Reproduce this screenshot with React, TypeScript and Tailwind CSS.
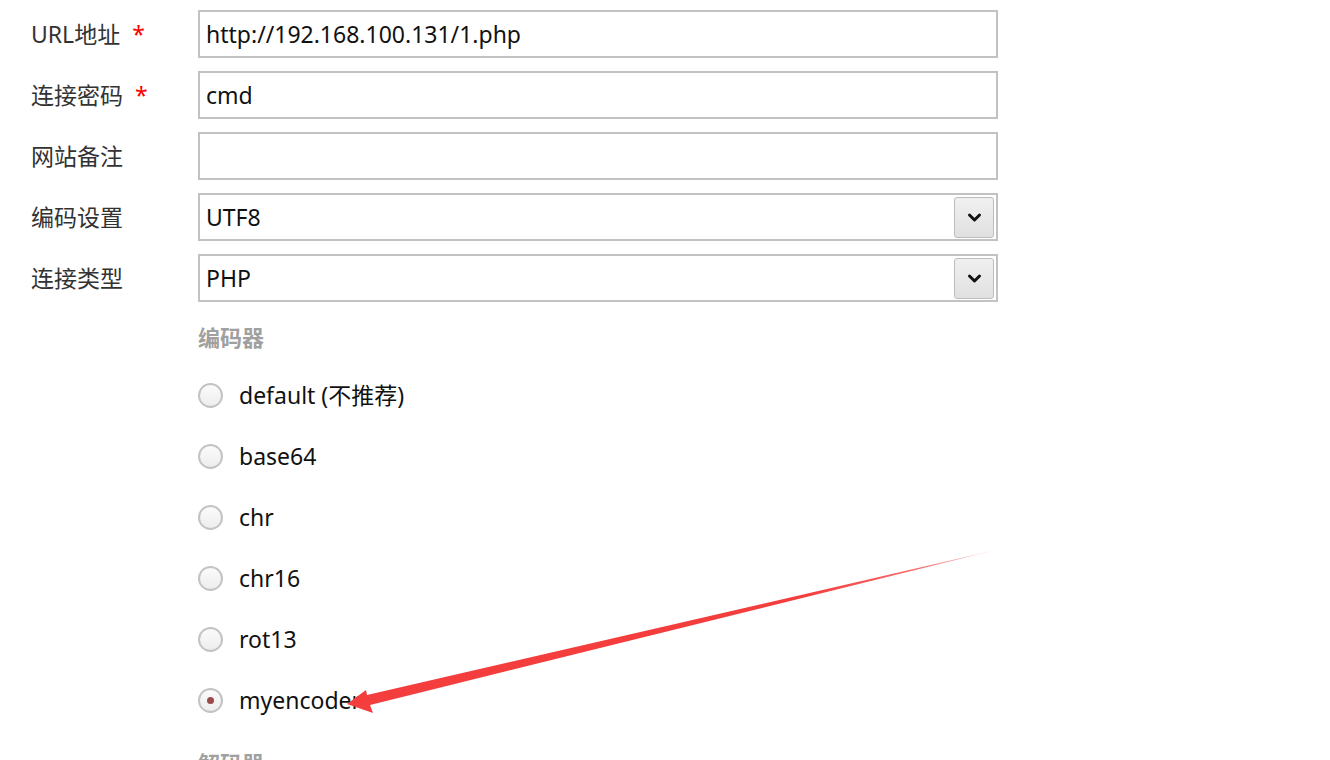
import React from "react";

const font = { fontFamily: '"Noto Sans", "Noto Sans CJK SC", sans-serif' };

const fields = [
  { label: "URL地址", required: true, value: "http://192.168.100.131/1.php", select: false },
  { label: "连接密码", required: true, value: "cmd", select: false },
  { label: "网站备注", required: false, value: "", select: false },
  { label: "编码设置", required: false, value: "UTF8", select: true },
  { label: "连接类型", required: false, value: "PHP", select: true },
];

const encoders = ["default (不推荐)", "base64", "chr", "chr16", "rot13", "myencoder"];

const Chevron = () => (
  <svg width="15" height="11" viewBox="0 0 15 11">
    <path d="M2.5 3 L7.5 8 L12.5 3" fill="none" stroke="#111" strokeWidth="3" strokeLinecap="round" strokeLinejoin="round" />
  </svg>
);

const Radio = ({ checked }: { checked: boolean }) => (
  <span className="flex h-[25px] w-[25px] items-center justify-center rounded-full border-2 border-[#c3c3c3] bg-gradient-to-b from-[#fbfbfb] to-[#ededed]">
    {checked && <span className="h-[7px] w-[7px] rounded-full bg-[#9b4a4a]" />}
  </span>
);

const Arrow = () => (
  <svg className="pointer-events-none absolute left-0 top-0" width="1330" height="760">
    <defs>
      <linearGradient id="fade" x1="1000" y1="549" x2="348" y2="704" gradientUnits="userSpaceOnUse">
        <stop offset="0" stopColor="#f43d3d" stopOpacity="0.15" />
        <stop offset="0.12" stopColor="#f43d3d" stopOpacity="0.75" />
        <stop offset="0.3" stopColor="#f43d3d" stopOpacity="1" />
        <stop offset="1" stopColor="#f43d3d" stopOpacity="1" />
      </linearGradient>
    </defs>
    <polygon points="347,704 366,690 367,695 1000,549 370,705 373,713" fill="url(#fade)" />
  </svg>
);

export default function App() {
  return (
    <div className="relative h-[760px] w-[1330px] overflow-hidden bg-white text-[#111]" style={font}>
      <div className="flex flex-col gap-[13px] pt-[10px]">
        {fields.map((f) => (
          <div key={f.label} className="flex h-[48px] items-center">
            <div className="w-[198px] pl-[31px] text-[23px] leading-[30px] text-[#333]">
              {f.label}
              {f.required && <span className="ml-[12px] text-[#f00]">*</span>}
            </div>
            <div className="flex h-[48px] w-[800px] items-center justify-between border-2 border-[#c2c2c2] pl-[6px] pr-[2px] text-[23px]">
              <span>{f.value}</span>
              {f.select && (
                <span className="flex h-[41px] w-[40px] items-center justify-center rounded-[3px] border border-[#bcbcbc] bg-gradient-to-b from-[#f0f0f0] to-[#e0e0e0]">
                  <Chevron />
                </span>
              )}
            </div>
          </div>
        ))}
      </div>
      <div className="pl-[198px]">
        <div className="mt-[20px] h-[30px] text-[22px] font-semibold leading-[30px] text-[#a0a0a0]">编码器</div>
        <div className="mt-[28px] flex flex-col gap-[31px]">
          {encoders.map((e) => (
            <div key={e} className="flex h-[30px] items-center gap-[16px]">
              <Radio checked={e === "myencoder"} />
              <span className="text-[23px] leading-[30px]">{e}</span>
            </div>
          ))}
        </div>
        <div className="mt-[33px] h-[30px] text-[22px] font-semibold leading-[30px] text-[#a0a0a0]">解码器</div>
      </div>
      <Arrow />
    </div>
  );
}
